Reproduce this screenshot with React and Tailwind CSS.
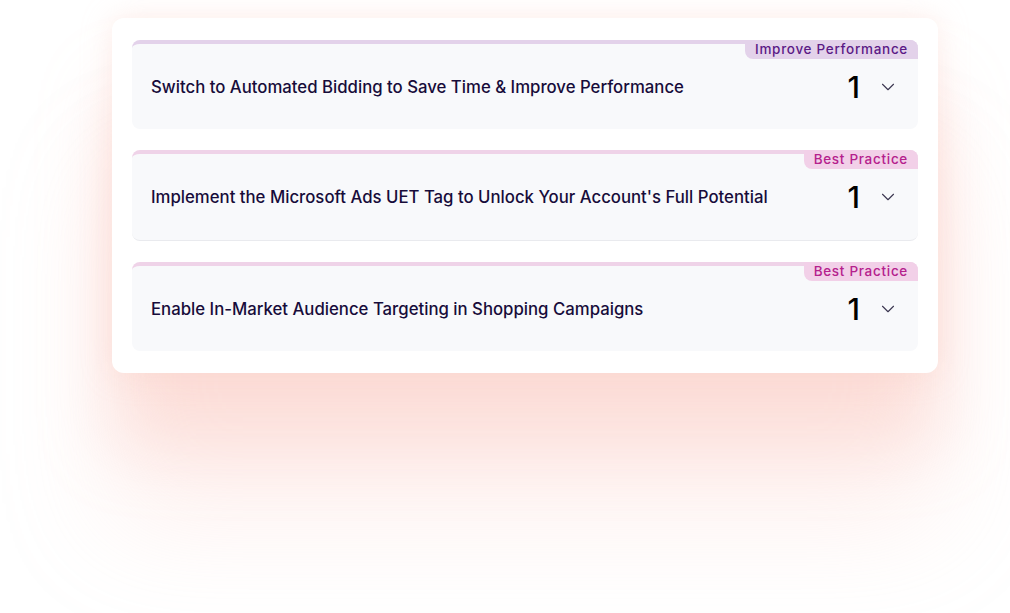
import { ChevronDown } from "lucide-react";

const items = [
  {
    title: "Switch to Automated Bidding to Save Time & Improve Performance",
    tag: "Improve Performance",
    kind: "perf",
    count: 1,
  },
  {
    title: "Implement the Microsoft Ads UET Tag to Unlock Your Account's Full Potential",
    tag: "Best Practice",
    kind: "best",
    count: 1,
    divider: true,
  },
  {
    title: "Enable In-Market Audience Targeting in Shopping Campaigns",
    tag: "Best Practice",
    kind: "best",
    count: 1,
  },
];

function Recommendation({ item }) {
  const perf = item.kind === "perf";
  return (
    <div
      className={`relative rounded-lg bg-[#f8f9fb] border-t-4 flex items-center pl-[19px] pr-[19px] ${
        perf ? "border-[#e3d2ea]" : "border-[#efd3e8]"
      } ${item.divider ? "h-[91px] border-b border-b-[#e9eaee]" : "h-[89px]"}`}
    >
      <span
        className={`absolute -top-1 right-0 h-[19px] flex items-center px-[10px] rounded-tr-lg rounded-bl-lg text-[13.5px] font-medium tracking-[0.7px] ${
          perf ? "bg-[#e3d2ea] text-[#5b1a86]" : "bg-[#f2d0e8] text-[#b5218d]"
        }`}
      >
        {item.tag}
      </span>
      <h3 className="flex-1 pt-[2px] text-[16.75px] font-medium text-[#170c3a]">{item.title}</h3>
      <span className="text-[30px] leading-none font-medium text-black mr-[17px]">{item.count}</span>
      <ChevronDown className="h-[22px] w-[22px] text-[#3b3650]" strokeWidth={1.2} />
    </div>
  );
}

export default function App() {
  return (
    <div
      className="w-[1010px] h-[613px] bg-white overflow-hidden pt-[18px] pl-[112px]"
      style={{ fontFamily: "Inter, 'Open Sans', sans-serif" }}
    >
      <div className="w-[826px] rounded-xl bg-white px-5 pt-[22px] pb-[22px] flex flex-col gap-[21px] shadow-[0_0_30px_rgba(250,200,190,0.35),0_70px_70px_rgba(250,185,175,0.35),0_150px_110px_rgba(250,200,190,0.25)]">
        {items.map((item, i) => (
          <Recommendation key={i} item={item} />
        ))}
      </div>
    </div>
  );
}
